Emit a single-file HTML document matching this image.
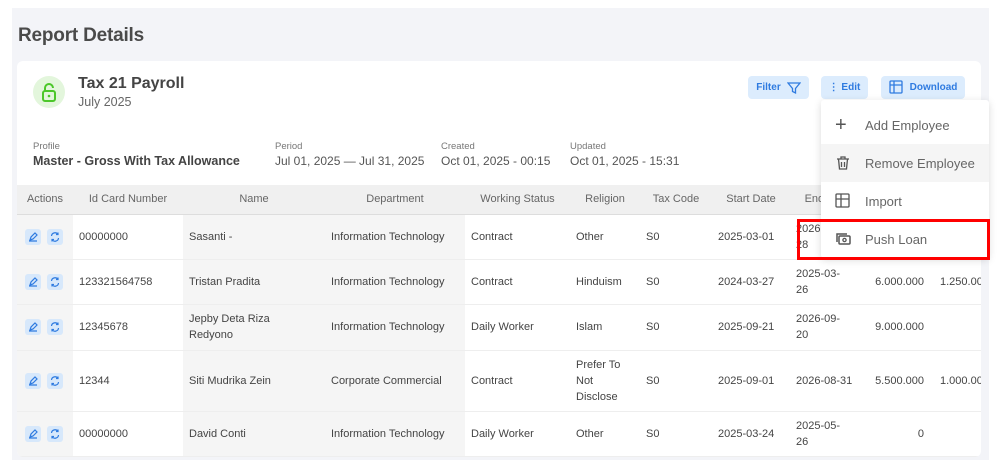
<!DOCTYPE html>
<html><head><meta charset="utf-8"><style>
*{box-sizing:border-box;margin:0;padding:0}
body{width:1007px;height:465px;background:#fff;font-family:"Liberation Sans",sans-serif;color:#3a3a3a;position:relative;overflow:hidden}
.bg{position:absolute;left:12px;top:8px;width:977px;height:452px;background:#f3f4f8}
.title{position:absolute;left:18px;top:25px;font-size:19px;color:#4a4a4a;font-weight:bold;letter-spacing:-0.2px}
.card{position:absolute;left:17px;top:61px;width:964px;height:396px;background:#fff;border-radius:6px;overflow:hidden}
.lock{position:absolute;left:16px;top:15px;width:32px;height:32px;border-radius:50%;background:#e3f6dc}
.h1{position:absolute;left:61px;top:14px;font-size:16px;color:#444;font-weight:bold}
.h2{position:absolute;left:61px;top:34px;font-size:12.5px;color:#666}
.lbl{position:absolute;top:80px;font-size:9.5px;color:#777}
.val{position:absolute;top:93px;font-size:12px;color:#555}
.btn{position:absolute;top:15px;height:23px;background:#dcecfd;border-radius:4px;color:#2f7be0;font-size:10px;font-weight:bold;display:flex;align-items:center;justify-content:center;gap:6px}
table{position:absolute;left:0;top:124px;border-collapse:collapse;font-size:11px;table-layout:fixed;width:990px}
th{height:29px;background:#f0f0f0;font-weight:normal;color:#666;border-bottom:1px solid #ddd;text-align:center}
td{border-bottom:1px solid #eee;color:#444;padding-left:6px;line-height:16px}
td.s{background:#f5f5f5}
.ic{display:inline-block;width:16px;height:16px;background:#d7e8fb;border-radius:3px;margin-left:2px;margin-right:4px;vertical-align:middle}
.ic svg{display:block}
.menu{position:absolute;left:821px;top:100px;width:168px;height:158px;background:#fff;box-shadow:0 2px 8px rgba(0,0,0,.15);border-radius:3px}
.mi{height:38px;display:flex;align-items:center;font-size:13px;color:#666;padding-left:14px;gap:14px}
.red{position:absolute;left:797px;top:219px;width:193px;height:41px;border:3px solid #f00}
</style></head><body>
<div class="bg"></div>
<div class="title">Report Details</div>
<div class="card">
<div class="lock"><svg width="32" height="32" viewBox="0 0 32 32"><rect x="10" y="15" width="12" height="10" rx="2" fill="none" stroke="#4cc72a" stroke-width="2"/><path d="M12 15v-3a4 4 0 0 1 8 0" fill="none" stroke="#4cc72a" stroke-width="2"/><circle cx="16" cy="20" r="1.3" fill="#4cc72a"/></svg></div>
<div class="h1">Tax 21 Payroll</div>
<div class="h2">July 2025</div>
<div class="lbl" style="left:16px">Profile</div><div class="val" style="left:16px;font-weight:bold;font-size:12.5px;color:#444">Master - Gross With Tax Allowance</div>
<div class="lbl" style="left:258px">Period</div><div class="val" style="left:258px">Jul 01, 2025 — Jul 31, 2025</div>
<div class="lbl" style="left:424px">Created</div><div class="val" style="left:424px">Oct 01, 2025 - 00:15</div>
<div class="lbl" style="left:553px">Updated</div><div class="val" style="left:553px">Oct 01, 2025 - 15:31</div>
<div class="btn" style="left:731px;width:61px">Filter <svg width="14" height="14" viewBox="0 0 14 14"><path d="M1 2h12L8.5 7.5V12l-3-1.5V7.5z" fill="none" stroke="#2f7be0" stroke-width="1.3"/></svg></div>
<div class="btn" style="left:804px;width:47px">⋮ Edit</div>
<div class="btn" style="left:864px;width:84px"><svg width="15" height="15" viewBox="0 0 15 15"><rect x="1" y="1" width="12" height="12" rx="1" fill="none" stroke="#2f7be0" stroke-width="1.3"/><path d="M1 5h12M5 1v12" stroke="#2f7be0" stroke-width="1.3"/></svg>Download</div>
<table>
<colgroup><col style="width:56px"><col style="width:110px"><col style="width:142px"><col style="width:140px"><col style="width:105px"><col style="width:70px"><col style="width:72px"><col style="width:78px"><col style="width:75px"><col style="width:59px"><col style="width:83px"></colgroup>
<tr><th>Actions</th><th>Id Card Number</th><th>Name</th><th>Department</th><th>Working Status</th><th>Religion</th><th>Tax Code</th><th>Start Date</th><th>End Date</th><th></th><th></th></tr>
<tr style="height:45px"><td class="s"><span class="ic"><svg width="16" height="16" viewBox="0 0 16 16"><path d="M5 11l1-3 4-4 2 2-4 4zM4 12h8" fill="none" stroke="#2f7be0" stroke-width="1.2"/></svg></span><span class="ic"><svg width="16" height="16" viewBox="0 0 16 16"><path d="M4.5 7a3.5 3.5 0 0 1 6.5-1.5M11.5 9a3.5 3.5 0 0 1-6.5 1.5M11 3.5v2h-2M5 12.5v-2h2" fill="none" stroke="#2f7be0" stroke-width="1.2"/></svg></span></td><td>00000000</td><td class="s">Sasanti -</td><td class="s">Information Technology</td><td>Contract</td><td>Other</td><td>S0</td><td>2025-03-01</td><td>2026-<br>28</td><td></td><td></td></tr>
<tr style="height:45px"><td class="s"><span class="ic"><svg width="16" height="16" viewBox="0 0 16 16"><path d="M5 11l1-3 4-4 2 2-4 4zM4 12h8" fill="none" stroke="#2f7be0" stroke-width="1.2"/></svg></span><span class="ic"><svg width="16" height="16" viewBox="0 0 16 16"><path d="M4.5 7a3.5 3.5 0 0 1 6.5-1.5M11.5 9a3.5 3.5 0 0 1-6.5 1.5M11 3.5v2h-2M5 12.5v-2h2" fill="none" stroke="#2f7be0" stroke-width="1.2"/></svg></span></td><td>123321564758</td><td class="s">Tristan Pradita</td><td class="s">Information Technology</td><td>Contract</td><td>Hinduism</td><td>S0</td><td>2024-03-27</td><td>2025-03-<br>26</td><td style="text-align:right">6.000.000</td><td style="padding-left:16px">1.250.000</td></tr>
<tr style="height:46px"><td class="s"><span class="ic"><svg width="16" height="16" viewBox="0 0 16 16"><path d="M5 11l1-3 4-4 2 2-4 4zM4 12h8" fill="none" stroke="#2f7be0" stroke-width="1.2"/></svg></span><span class="ic"><svg width="16" height="16" viewBox="0 0 16 16"><path d="M4.5 7a3.5 3.5 0 0 1 6.5-1.5M11.5 9a3.5 3.5 0 0 1-6.5 1.5M11 3.5v2h-2M5 12.5v-2h2" fill="none" stroke="#2f7be0" stroke-width="1.2"/></svg></span></td><td>12345678</td><td class="s">Jepby Deta Riza<br>Redyono</td><td class="s">Information Technology</td><td>Daily Worker</td><td>Islam</td><td>S0</td><td>2025-09-21</td><td>2026-09-<br>20</td><td style="text-align:right">9.000.000</td><td></td></tr>
<tr style="height:61px"><td class="s"><span class="ic"><svg width="16" height="16" viewBox="0 0 16 16"><path d="M5 11l1-3 4-4 2 2-4 4zM4 12h8" fill="none" stroke="#2f7be0" stroke-width="1.2"/></svg></span><span class="ic"><svg width="16" height="16" viewBox="0 0 16 16"><path d="M4.5 7a3.5 3.5 0 0 1 6.5-1.5M11.5 9a3.5 3.5 0 0 1-6.5 1.5M11 3.5v2h-2M5 12.5v-2h2" fill="none" stroke="#2f7be0" stroke-width="1.2"/></svg></span></td><td>12344</td><td class="s">Siti Mudrika Zein</td><td class="s">Corporate Commercial</td><td>Contract</td><td>Prefer To<br>Not<br>Disclose</td><td>S0</td><td>2025-09-01</td><td>2026-08-31</td><td style="text-align:right">5.500.000</td><td style="padding-left:16px">1.000.000</td></tr>
<tr style="height:45px"><td class="s"><span class="ic"><svg width="16" height="16" viewBox="0 0 16 16"><path d="M5 11l1-3 4-4 2 2-4 4zM4 12h8" fill="none" stroke="#2f7be0" stroke-width="1.2"/></svg></span><span class="ic"><svg width="16" height="16" viewBox="0 0 16 16"><path d="M4.5 7a3.5 3.5 0 0 1 6.5-1.5M11.5 9a3.5 3.5 0 0 1-6.5 1.5M11 3.5v2h-2M5 12.5v-2h2" fill="none" stroke="#2f7be0" stroke-width="1.2"/></svg></span></td><td>00000000</td><td class="s">David Conti</td><td class="s">Information Technology</td><td>Daily Worker</td><td>Other</td><td>S0</td><td>2025-03-24</td><td>2025-05-<br>26</td><td style="text-align:right">0</td><td></td></tr>
</table>
</div>
<div class="menu">
<div class="mi" style="margin-top:6px"><span style="font-size:20px;color:#555;width:16px">+</span>Add Employee</div>
<div class="mi" style="background:#f5f5f5"><svg width="16" height="16" viewBox="0 0 16 16"><path d="M2 4h12M6 4V2h4v2M3.5 4l1 10h7l1-10M6.5 7v5M9.5 7v5" fill="none" stroke="#555" stroke-width="1.3"/></svg>Remove Employee</div>
<div class="mi"><svg width="16" height="16" viewBox="0 0 16 16"><rect x="1" y="1" width="13" height="13" rx="1" fill="none" stroke="#555" stroke-width="1.3"/><path d="M1 6h13M6 1v13" stroke="#555" stroke-width="1.3"/></svg>Import</div>
<div class="mi"><svg width="16" height="16" viewBox="0 0 16 16"><rect x="4" y="5" width="11" height="8" rx="1" fill="none" stroke="#555" stroke-width="1.5"/><path d="M2 11V3h10" fill="none" stroke="#555" stroke-width="1.5"/><circle cx="9.5" cy="9" r="1.6" fill="none" stroke="#555" stroke-width="1.3"/></svg>Push Loan</div>
</div>
<div class="red"></div>
</body></html>
